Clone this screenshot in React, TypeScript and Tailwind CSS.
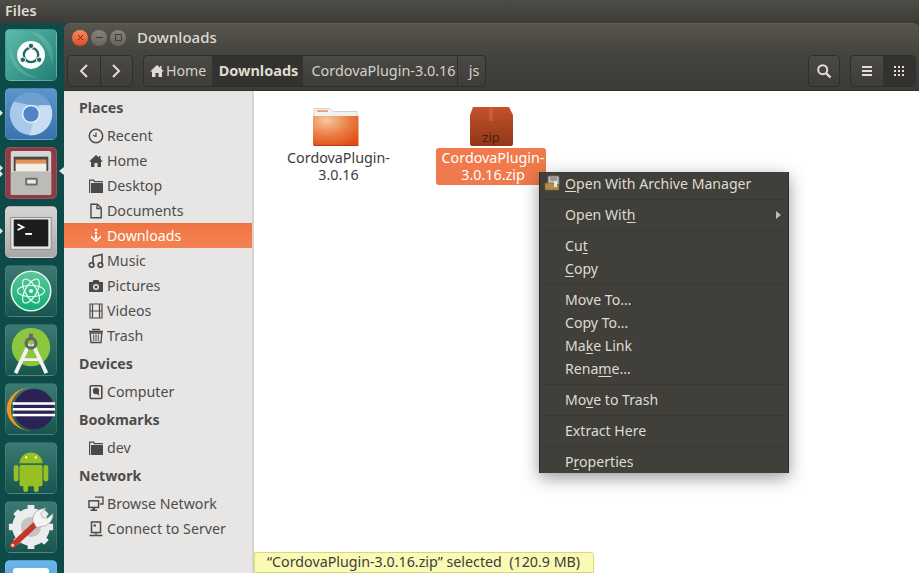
import React from "react";

const font = { fontFamily: '"Noto Sans", sans-serif' };

function Tile({ children, bg, pip, pips, active }: { children: React.ReactNode; bg: string; pip?: boolean; pips?: boolean; active?: boolean }) {
  return (
    <div className="relative h-[59px] w-[64px] shrink-0 pl-[5px]">
      <div className={`h-[52px] w-[52px] overflow-hidden rounded-[5px] border border-white/10 ${bg}`}>{children}</div>
      {pip && <span className="absolute left-0 top-[22px] h-0 w-0 border-y-[3px] border-l-[3px] border-y-transparent border-l-[#e4e4e4]" />}
      {pips && (
        <>
          <span className="absolute left-0 top-[18px] h-0 w-0 border-y-[3px] border-l-[3px] border-y-transparent border-l-[#e4e4e4]" />
          <span className="absolute left-0 top-[24px] h-0 w-0 border-y-[3px] border-l-[3px] border-y-transparent border-l-[#e4e4e4]" />
        </>
      )}
      {active && <span className="absolute right-0 top-[20px] h-0 w-0 border-y-[4px] border-r-[5px] border-y-transparent border-r-[#e8e6e4]" />}
    </div>
  );
}

const Launcher = () => (
  <div className="flex h-full w-[64px] shrink-0 flex-col overflow-hidden bg-[#0e4a47] pt-[6px]">
    <Tile bg="bg-gradient-to-br from-[#5cbcab] to-[#1f7f76]">
      <svg viewBox="0 0 52 52" className="h-full w-full">
        <path d="M26 2C44 4 52 20 48 36 44 16 34 8 26 2ZM4 18C2 36 16 50 34 50 18 46 8 34 4 18Z" fill="#ffffff" opacity=".14" />
        <circle cx="26" cy="26" r="14.5" fill="#fff" />
        <circle cx="26" cy="26" r="7.500" fill="none" stroke="#1e6a63" strokeWidth="2.400" />
        <circle cx="26" cy="16.500" r="2.800" fill="#1e6a63" stroke="#fff" />
        <circle cx="17.500" cy="31" r="2.800" fill="#1e6a63" stroke="#fff" />
        <circle cx="34.500" cy="31" r="2.800" fill="#1e6a63" stroke="#fff" />
      </svg>
    </Tile>
    <Tile bg="bg-gradient-to-b from-[#5a95cb] to-[#3973ad]" pip>
      <svg viewBox="0 0 52 52" className="h-full w-full">
        <circle cx="26" cy="26" r="22" fill="#a6c9ec" />
        <path d="M8 13 A22 22 0 0 1 46 17 L26 17 Z" fill="#6f9fcf" />
        <path d="M24 48 A22 22 0 0 0 46 17 L35 17 Z" fill="#c8ddf2" />
        <circle cx="26" cy="26" r="9.500" fill="#e8f0f8" />
        <circle cx="26" cy="26" r="8" fill="#4f86c6" />
      </svg>
    </Tile>
    <Tile bg="bg-[#8c3c46]" pips active>
      <svg viewBox="0 0 52 52" className="h-full w-full">
        <rect x="5" y="3" width="42" height="46" rx="2" fill="#d8d6d2" />
        <rect x="8" y="9" width="36" height="15" fill="#4a4845" />
        <rect x="10" y="12" width="32" height="4" fill="#e8914e" />
        <rect x="10" y="16" width="32" height="8" fill="#f3efe6" />
        <path d="M5 25h42v22a2 2 0 0 1-2 2H7a2 2 0 0 1-2-2Z" fill="#bdbbb7" />
        <rect x="20" y="31" width="13" height="8" rx="1" fill="#6e6c68" />
        <rect x="22" y="33" width="9" height="4" fill="#e9e8e5" />
      </svg>
    </Tile>
    <Tile bg="bg-gradient-to-b from-[#d5d5d3] to-[#a8a8a6]" pip>
      <svg viewBox="0 0 52 52" className="h-full w-full">
        <rect x="5" y="11" width="42" height="33" fill="#e8e8e8" stroke="#8a8a8a" />
        <rect x="8" y="13" width="36" height="28" fill="#1d1d1d" />
        <path d="M12 18l6 3-6 3" fill="none" stroke="#fff" strokeWidth="1.800" />
        <rect x="20" y="27" width="7" height="2" fill="#fff" />
      </svg>
    </Tile>
    <Tile bg="bg-gradient-to-b from-[#3b7a72] to-[#17564f]">
      <svg viewBox="0 0 52 52" className="h-full w-full">
        <defs>
          <linearGradient id="atomg" x1="0" y1="0" x2="0" y2="1">
            <stop offset="0" stopColor="#5fc79c" />
            <stop offset="1" stopColor="#0fae74" />
          </linearGradient>
        </defs>
        <circle cx="26" cy="26" r="20.500" fill="url(#atomg)" stroke="#e8f5ee" strokeWidth="1.600" />
        <g fill="none" stroke="#eafff5" strokeWidth="1.200">
          <ellipse cx="26" cy="26" rx="14" ry="6" />
          <ellipse cx="26" cy="26" rx="14" ry="6" transform="rotate(60 26 26)" />
          <ellipse cx="26" cy="26" rx="14" ry="6" transform="rotate(120 26 26)" />
        </g>
        <circle cx="26" cy="26" r="2.200" fill="#eafff5" />
      </svg>
    </Tile>
    <Tile bg="bg-gradient-to-b from-[#3b7a72] to-[#17564f]">
      <svg viewBox="0 0 52 52" className="h-full w-full">
        <circle cx="26" cy="23" r="20" fill="#8cc63f" />
        <path d="M10 50L24 20M42 50L28 20" stroke="#f2f2f2" strokeWidth="4" />
        <path d="M16 36h20" stroke="#f2f2f2" strokeWidth="3" />
        <circle cx="26" cy="19" r="5" fill="none" stroke="#666" strokeWidth="3.400" />
        <rect x="24" y="9" width="4" height="6" fill="#666" />
      </svg>
    </Tile>
    <Tile bg="bg-gradient-to-b from-[#3b7a72] to-[#17564f]">
      <svg viewBox="0 0 52 52" className="h-full w-full">
        <path d="M28 3A23 23 0 1 0 28 49A26 22 0 0 1 28 3Z" fill="#f7941e" />
        <circle cx="29" cy="26" r="21" fill="#2c2255" />
        <rect x="7" y="19" width="44" height="2.600" fill="#fff" />
        <rect x="7" y="25" width="44" height="2.600" fill="#fff" />
        <rect x="7" y="31" width="44" height="2.600" fill="#fff" />
      </svg>
    </Tile>
    <Tile bg="bg-gradient-to-b from-[#3b7a72] to-[#17564f]">
      <svg viewBox="0 0 52 52" className="h-full w-full" fill="#97c024">
        <path d="M14 21a12 11 0 0 1 24 0Z" />
        <rect x="14" y="23" width="24" height="22" rx="2" />
        <rect x="8" y="23" width="5" height="17" rx="2.500" />
        <rect x="39" y="23" width="5" height="17" rx="2.500" />
        <rect x="18" y="40" width="5" height="11" rx="2.500" />
        <rect x="29" y="40" width="5" height="11" rx="2.500" />
        <circle cx="21" cy="15" r="1.200" fill="#fff" />
        <circle cx="31" cy="15" r="1.200" fill="#fff" />
      </svg>
    </Tile>
    <Tile bg="bg-gradient-to-b from-[#3b7a72] to-[#17564f]">
      <svg viewBox="0 0 52 52" className="h-full w-full">
        <circle cx="26" cy="26" r="11" fill="#c4c4c4" />
        <circle cx="26" cy="26" r="15" fill="none" stroke="#ececec" strokeWidth="9" />
        <g stroke="#ececec" strokeWidth="7">
          <path d="M26 3v7M26 42v7M3 26h7M42 26h7M10 10l5 5M37 37l5 5M42 10l-5 5M15 37l-5 5" />
        </g>
        <path d="M7 45L33 21" stroke="#c8352a" strokeWidth="6" strokeLinecap="round" />
        <circle cx="7" cy="45" r="1.500" fill="#f5d5d0" />
        <path d="M28 20c-1-6 3-12 10-13l4-1-6 6 2 4 5 1 6-5c0 7-4 12-10 13-3 .5-5 1-7 2Z" fill="#f4f4f4" stroke="#8f8f8f" strokeWidth=".6" />
      </svg>
    </Tile>
    <Tile bg="bg-gradient-to-b from-[#6bb6e8] to-[#3f8fd0]">
      <div className="mx-auto mt-[7px] h-[30px] w-[36px] rounded-[3px] bg-white" />
    </Tile>
  </div>
);

type IconName = "recent" | "home" | "folder" | "doc" | "down" | "music" | "pic" | "video" | "trash" | "disk" | "net" | "server";

function Glyph({ name, className = "" }: { name: IconName; className?: string }) {
  const common = { width: 16, height: 16, viewBox: "0 0 16 16", className, fill: "currentColor" };
  switch (name) {
    case "recent":
      return (
        <svg {...common}>
          <circle cx="8" cy="8" r="6.700" fill="none" stroke="currentColor" strokeWidth="1.500" />
          <path d="M8 4.500V8.500L5 7.400" fill="none" stroke="currentColor" strokeWidth="1.200" />
        </svg>
      );
    case "home":
      return (
        <svg {...common}>
          <path d="M8 2L1 8.500h2V14h3.500v-4h3v4H13V8.500h2L12.500 6V3H11v1.600Z" />
        </svg>
      );
    case "folder":
      return (
        <svg {...common}>
          <path d="M1 1.500h5l1 1.500h8v1.200H6.200L5 2.700H2.200V15H1Z" />
          <path d="M3 5h12v10H3Z" />
        </svg>
      );
    case "doc":
      return (
        <svg {...common}>
          <path d="M3 1.200h6.500L13.200 5v9.800H3Z M9 2.200V5.500h3.200" fill="none" stroke="currentColor" strokeWidth="1.400" />
        </svg>
      );
    case "down":
      return (
        <svg {...common}>
          <circle cx="8" cy="1.800" r="1.300" />
          <circle cx="8" cy="5" r="1.300" />
          <path d="M3 7.500L8 12l5-4.500v2L8 14 3 9.500Z M7 7h2v4H7Z" />
        </svg>
      );
    case "music":
      return (
        <svg {...common}>
          <path d="M5 3.500L14 1.500v10" fill="none" stroke="currentColor" strokeWidth="1.600" />
          <path d="M5 3.500v8" fill="none" stroke="currentColor" strokeWidth="1.600" />
          <circle cx="3.600" cy="12" r="2.300" fill="none" stroke="currentColor" strokeWidth="1.600" />
          <circle cx="12.400" cy="12" r="2.300" fill="none" stroke="currentColor" strokeWidth="1.600" />
        </svg>
      );
    case "pic":
      return (
        <svg {...common}>
          <path fillRule="evenodd" d="M1 4h3.500l1-2h5l1 2H15v10H1Z M8 6a3 3 0 1 0 0 6 3 3 0 0 0 0-6Z" />
          <circle cx="8" cy="9" r="1.500" />
        </svg>
      );
    case "video":
      return (
        <svg {...common}>
          <path d="M2 .5v15M14 .5v15M2 8h12M4.500 1v14M11.500 1v14M2 1h12M2 15h12" fill="none" stroke="currentColor" strokeWidth="1.200" />
        </svg>
      );
    case "trash":
      return (
        <svg {...common}>
          <path d="M1 3.500h14M4 1.500h8" stroke="currentColor" strokeWidth="1.400" />
          <path d="M2.200 5h11.600l-.8 9.500H3Z" fill="none" stroke="currentColor" strokeWidth="1.400" />
          <path d="M5.700 6.500v6.500M8 6.500v6.500M10.300 6.500v6.500" stroke="currentColor" strokeWidth="1" />
        </svg>
      );
    case "disk":
      return (
        <svg {...common}>
          <rect x="2.200" y="1.700" width="11.600" height="12.800" rx="1" fill="none" stroke="currentColor" strokeWidth="1.600" />
          <circle cx="8" cy="7" r="3.200" />
          <path d="M7.500 7l3.500 4" stroke="currentColor" strokeWidth="1.400" />
        </svg>
      );
    case "net":
      return (
        <svg {...common}>
          <path d="M7 1.200h8V8h-3" fill="none" stroke="currentColor" strokeWidth="1.300" />
          <rect x="1" y="4.800" width="9.600" height="6.600" fill="none" stroke="currentColor" strokeWidth="1.500" />
          <path d="M4.500 11.500h2.500v2h2V15H2.500v-1.500h2Z" />
        </svg>
      );
    case "server":
      return (
        <svg {...common}>
          <rect x="3.500" y="1" width="9" height="10.500" fill="none" stroke="currentColor" strokeWidth="1.500" />
          <rect x="5.500" y="3.500" width="2.500" height="2" />
          <path d="M8 11.500v2M1.500 14.500h13" stroke="currentColor" strokeWidth="1.500" />
        </svg>
      );
  }
}

const Heading = ({ children }: { children: React.ReactNode }) => (
  <div className="flex h-[31px] items-center pl-[15px] text-[14.2px] font-bold text-[#4c4c4c]">{children}</div>
);

const Row = ({ icon, children, active }: { icon: IconName; children: React.ReactNode; active?: boolean }) => (
  <div
    className={`flex h-[25px] items-center pl-[24px] text-[14.2px] ${
      active ? "bg-gradient-to-b from-[#ee7444] to-[#f58152] text-white" : "text-[#4c4c4c]"
    }`}
  >
    <Glyph name={icon} className={active ? "text-white" : "text-[#4a4a4a]"} />
    <span className="ml-[3px]">{children}</span>
  </div>
);

const Sidebar = () => (
  <div className="w-[190px] shrink-0 border-r-2 border-[#d6d4d1] bg-[#e8e6e4] pt-[1px]">
    <Heading>Places</Heading>
    <Row icon="recent">Recent</Row>
    <Row icon="home">Home</Row>
    <Row icon="folder">Desktop</Row>
    <Row icon="doc">Documents</Row>
    <Row icon="down" active>Downloads</Row>
    <Row icon="music">Music</Row>
    <Row icon="pic">Pictures</Row>
    <Row icon="video">Videos</Row>
    <Row icon="trash">Trash</Row>
    <Heading>Devices</Heading>
    <Row icon="disk">Computer</Row>
    <Heading>Bookmarks</Heading>
    <Row icon="folder">dev</Row>
    <Heading>Network</Heading>
    <Row icon="net">Browse Network</Row>
    <Row icon="server">Connect to Server</Row>
  </div>
);

const FolderIcon = () => (
  <svg width="48" height="40" viewBox="0 0 48 40">
    <defs>
      <radialGradient id="fg" cx="0.3" cy="0.15" r="0.95">
        <stop offset="0" stopColor="#f6c79e" />
        <stop offset="0.55" stopColor="#ea7d42" />
        <stop offset="1" stopColor="#df4d15" />
      </radialGradient>
    </defs>
    <path d="M2 1.500h16l3 3h24v10H2Z" fill="#f4f2ef" stroke="#c9c6c2" strokeWidth=".8" />
    <rect x="5" y="3" width="11" height="2" fill="#f0a27a" />
    <path d="M1 9h45.500v28.500a1.500 1.500 0 0 1-1.500 1H2.500A1.500 1.500 0 0 1 1 37.500Z" fill="url(#fg)" />
    <rect x="1.500" y="38" width="45" height="1" fill="#a83b10" />
  </svg>
);

const ZipIcon = () => (
  <svg width="46" height="40" viewBox="0 0 46 40">
    <defs>
      <linearGradient id="zg" x1="0" y1="0" x2="0" y2="1">
        <stop offset="0" stopColor="#c4522c" />
        <stop offset="1" stopColor="#8f3718" />
      </linearGradient>
    </defs>
    <path d="M5 0h36l4 8v29a2 2 0 0 1-2 2H4a2 2 0 0 1-2-2V8Z" fill="url(#zg)" />
    <rect x="21" y="0" width="4" height="14" fill="#d0693f" opacity=".6" />
    <text x="23" y="35" textAnchor="middle" fontSize="13" fill="#4e1c0b" fontFamily="Noto Sans, sans-serif">zip</text>
  </svg>
);

const Content = () => (
  <div className="flex flex-1 gap-[44px] bg-white pl-[26px] pt-[16px] text-[14.3px] leading-[17px] text-[#3c3c3c]">
    <div className="flex w-[112px] flex-col items-center">
      <FolderIcon />
      <div className="mt-[1px] pl-[5px] pt-[1px] text-center">CordovaPlugin-<br />3.0.16</div>
    </div>
    <div className="flex w-[110px] flex-col items-center">
      <ZipIcon />
      <div className="mt-[1px] w-full rounded-[3px] bg-[#f07a4b] pb-[2px] pl-[4px] pt-[1px] text-center text-white">CordovaPlugin-<br />3.0.16.zip</div>
    </div>
  </div>
);

const Mnemonic = ({ before, u, after }: { before?: string; u: string; after?: string }) => (
  <span>
    {before}
    <span className="underline underline-offset-[2px] decoration-1">{u}</span>
    {after}
  </span>
);

const MenuItem = ({ children, icon, arrow }: { children: React.ReactNode; icon?: boolean; arrow?: boolean }) => (
  <div className="relative flex h-[23px] items-center pl-[25px] pr-[6px]">
    {icon && (
      <svg className="absolute left-[4px] top-[3px]" width="16" height="16" viewBox="0 0 16 16">
        <rect x="4" y="1" width="11" height="9" rx="1" fill="#c9c7c3" stroke="#6d6b66" />
        <path d="M6 3h7M6 5h7" stroke="#6d6b66" />
        <path d="M1 8h10l1 2h3v5H1Z" fill="#b08d4a" stroke="#7a5f2d" strokeWidth=".6" />
        <rect x="10" y="6" width="3" height="6" fill="#e8e6e2" />
      </svg>
    )}
    {children}
    {arrow && <span className="absolute right-[7px] top-[8px] h-0 w-0 border-y-[4px] border-l-[5px] border-y-transparent border-l-[#bdbcb8]" />}
  </div>
);

const Sep = () => (
  <div className="flex h-[8px] items-center px-[5px]">
    <div className="h-px w-full bg-[#383732]" />
  </div>
);

const ContextMenu = () => (
  <div className="absolute left-[539px] top-[172px] w-[250px] border-x border-[#2e2d29] bg-[#403f3a] text-[14.1px] text-[#dfdbd2] shadow-[0_5px_16px_rgba(0,0,0,0.4)]">
    <MenuItem icon><Mnemonic u="O" after="pen With Archive Manager" /></MenuItem>
    <Sep />
    <MenuItem arrow><Mnemonic before="Open Wit" u="h" /></MenuItem>
    <Sep />
    <MenuItem><Mnemonic before="Cu" u="t" /></MenuItem>
    <MenuItem><Mnemonic u="C" after="opy" /></MenuItem>
    <Sep />
    <MenuItem>Move To…</MenuItem>
    <MenuItem>Copy To…</MenuItem>
    <MenuItem><Mnemonic before="Ma" u="k" after="e Link" /></MenuItem>
    <MenuItem><Mnemonic before="Rena" u="m" after="e…" /></MenuItem>
    <Sep />
    <MenuItem><Mnemonic before="Mo" u="v" after="e to Trash" /></MenuItem>
    <Sep />
    <MenuItem>Extract Here</MenuItem>
    <Sep />
    <MenuItem><Mnemonic before="P" u="r" after="operties" /></MenuItem>
  </div>
);

const Toolbar = () => (
  <div className="flex h-[39px] shrink-0 items-start border-b border-[#2f2e2a] bg-gradient-to-b from-[#45443f] to-[#3c3b37] pl-[3px] pt-[3px] text-[14.5px] text-[#dfdbd2]">
    <div className="flex h-[32px] w-[66px] rounded-[4px] border border-[#2f2e2a] bg-gradient-to-b from-[#4a4944] to-[#3e3d39]">
      <div className="flex flex-1 items-center justify-center border-r border-[#2f2e2a]">
        <svg width="12" height="16" viewBox="0 0 12 16"><path d="M9 2L3 8l6 6" fill="none" stroke="#e2dfd8" strokeWidth="2" /></svg>
      </div>
      <div className="flex flex-1 items-center justify-center">
        <svg width="12" height="16" viewBox="0 0 12 16"><path d="M3 2l6 6-6 6" fill="none" stroke="#e2dfd8" strokeWidth="2" /></svg>
      </div>
    </div>
    <div className="ml-[10px] flex h-[32px] rounded-[4px] border border-[#2f2e2a] bg-gradient-to-b from-[#4a4944] to-[#3e3d39]">
      <div className="flex w-[68px] items-center gap-[1px] pl-[5px] text-[14.2px] text-[#d4d1ca]">
        <Glyph name="home" className="text-[#dfdbd2]" />
        <span>Home</span>
      </div>
      <div className="flex w-[91px] items-center justify-center bg-[#33322e] pl-[2px] font-bold">Downloads</div>
      <div className="flex w-[155px] items-center justify-center border-r border-[#2f2e2a] pl-[7px] text-[14.4px] text-[#d4d1ca]">CordovaPlugin-3.0.16</div>
      <div className="flex w-[27px] items-center justify-center pl-[5px] text-[#d4d1ca]">js</div>
    </div>
    <div className="ml-auto flex h-[32px] w-[32px] items-center justify-center rounded-[4px] border border-[#2f2e2a] bg-gradient-to-b from-[#4a4944] to-[#3e3d39]">
      <svg width="16" height="16" viewBox="0 0 16 16"><circle cx="6.700" cy="6.700" r="4.500" fill="none" stroke="#e2dfd8" strokeWidth="2" /><path d="M10 10l4.500 4.500" stroke="#e2dfd8" strokeWidth="2.400" /></svg>
    </div>
    <div className="ml-[10px] mr-[3px] flex h-[32px] w-[66px] rounded-[4px] border border-[#2f2e2a] bg-gradient-to-b from-[#4a4944] to-[#3e3d39]">
      <div className="flex flex-1 items-center justify-center">
        <svg width="12" height="12" viewBox="0 0 12 12"><path d="M1 2h10M1 6h10M1 10h10" stroke="#e2dfd8" strokeWidth="2" /></svg>
      </div>
      <div className="flex flex-1 items-center justify-center rounded-r-[4px] bg-[#33322e]">
        <svg width="12" height="12" viewBox="0 0 12 12" fill="#e2dfd8">
          <path d="M1 1h2v2H1zM5 1h2v2H5zM9 1h2v2H9zM1 5h2v2H1zM5 5h2v2H5zM9 5h2v2H9zM1 9h2v2H1zM5 9h2v2H5zM9 9h2v2H9z" />
        </svg>
      </div>
    </div>
  </div>
);

const TitleBar = () => (
  <div className="flex h-[29px] shrink-0 items-center rounded-t-[6px] border-t border-[#5f5d55] bg-gradient-to-b from-[#57554d] to-[#45443f] pb-[1px] pl-[8px] text-[15px] font-medium text-[#dfdbd2]">
    <div className="flex h-[16px] w-[16px] items-center justify-center rounded-full bg-gradient-to-b from-[#f28a5e] to-[#df4a17]">
      <svg width="7" height="7" viewBox="0 0 7 7"><path d="M1 1l5 5M6 1L1 6" stroke="#6e2a10" strokeWidth="1" /></svg>
    </div>
    <div className="ml-[3px] flex h-[16px] w-[16px] items-center justify-center rounded-full bg-gradient-to-b from-[#87857c] to-[#66645c]">
      <div className="h-px w-[7px] bg-[#3d3b36]" />
    </div>
    <div className="ml-[3px] flex h-[16px] w-[16px] items-center justify-center rounded-full bg-gradient-to-b from-[#87857c] to-[#66645c]">
      <div className="h-[7px] w-[7px] border border-[#3d3b36]" />
    </div>
    <span className="ml-[11px]">Downloads</span>
  </div>
);

export default function App() {
  return (
    <div className="relative flex h-[573px] w-[919px] flex-col overflow-hidden bg-[#0e4a47]" style={font}>
      <div className="flex h-[23px] shrink-0 items-center bg-gradient-to-b from-[#4d4c46] to-[#3c3b36] pb-[2px] pl-[5px] text-[14.5px] font-semibold text-[#dfdbd2]">Files</div>
      <div className="flex min-h-0 flex-1">
        <Launcher />
        <div className="flex min-w-0 flex-1 flex-col">
          <TitleBar />
          <Toolbar />
          <div className="flex min-h-0 flex-1">
            <Sidebar />
            <Content />
          </div>
        </div>
      </div>
      <ContextMenu />
      <div className="absolute left-[254px] top-[552px] flex h-[21px] w-[340px] items-center rounded-tr-[3px] border border-[#dcd873] bg-[#fbfab4] pb-[2px] pl-[12px] text-[14.25px] text-[#3c3c3c]">
        “CordovaPlugin-3.0.16.zip” selected&nbsp; (120.9 MB)
      </div>
    </div>
  );
}
